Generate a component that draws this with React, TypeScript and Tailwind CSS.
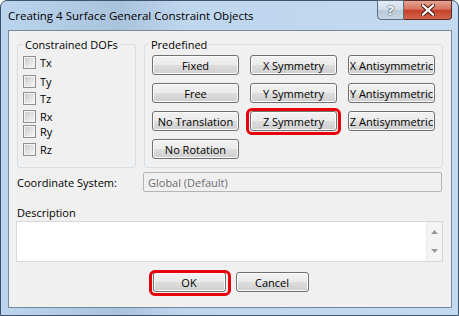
import { ReactNode } from 'react';

const font = { fontFamily: '"Open Sans", "Noto Sans", sans-serif' };

const btnBase =
  'h-[20px] rounded-[3px] border border-[#707070] bg-[linear-gradient(to_bottom,#f2f2f2_0%,#ebebeb_48%,#dddddd_52%,#cfcfcf_100%)] shadow-[inset_0_0_0_1px_#fbfbfb] text-[11px] leading-none text-black whitespace-nowrap flex items-center justify-center';

function Btn({ children, marked }: { children: ReactNode; marked?: boolean }) {
  return (
    <div className="relative">
      <div className={btnBase}>{children}</div>
      {marked && (
        <span className="absolute -inset-x-[4px] -top-[3px] -bottom-[4px] rounded-[6px] border-[3px] border-[#e8000c]" />
      )}
    </div>
  );
}

function Check({ label, mt }: { label: string; mt: string }) {
  return (
    <div className={`flex items-center gap-[4px] h-[13px] ${mt}`}>
      <span className="w-[13px] h-[13px] border border-[#8e8f8f] bg-[#f4f4f4] p-[1px]">
        <span className="block w-full h-full bg-[linear-gradient(135deg,#cbcbcb,#f6f6f6)]" />
      </span>
      <span className="text-[11px] leading-none text-black">{label}</span>
    </div>
  );
}

export default function App() {
  return (
    <div className="w-[459px] h-[316px] bg-white" style={font}>
      <div className="w-full h-full flex flex-col border border-[#3e5468] rounded-t-[7px] bg-[linear-gradient(to_right,#bcd5ee_0%,#aac3dc_26%,#bed6ee_40%,#c3daf0_100%)] px-[7px] pr-[6px] pb-[7px]">
        {/* title bar */}
        <div className="h-[29px] flex items-start justify-between shrink-0">
          <div className="pt-[7px] text-[11.5px] leading-[15px] text-black">Creating 4 Surface General Constraint Objects</div>
          <div className="flex -mt-px">
            <div className="w-[27px] h-[20px] rounded-bl-[4px] border border-[#5a6e82] bg-[linear-gradient(to_bottom,#e4edf5_0%,#d0dce8_50%,#b9c9d8_51%,#c7d6e4_100%)] flex items-center justify-center">
              <span className="text-[13px] font-bold leading-none text-white [text-shadow:0_0_2px_#3a4a5a,0_0_1px_#3a4a5a]">?</span>
            </div>
            <div className="w-[48px] h-[20px] rounded-br-[4px] border border-l-0 border-[#5a2a28] bg-[linear-gradient(to_bottom,#e6a593_0%,#d7735f_45%,#c4402a_52%,#d2664f_100%)] flex items-center justify-center">
              <svg width="14" height="12" viewBox="0 0 14 12">
                <path d="M2 1.5 L12 10.5 M12 1.5 L2 10.5" stroke="#4a1f1a" strokeWidth="4.2" strokeLinecap="square" />
                <path d="M2 1.5 L12 10.5 M12 1.5 L2 10.5" stroke="#ffffff" strokeWidth="2.2" strokeLinecap="square" />
              </svg>
            </div>
          </div>
        </div>

        {/* client area */}
        <div className="flex-1 flex flex-col border border-[#7b8a99] bg-[#f0f0f0]">
          <div className="flex gap-[8px] pl-[8px] pt-[6px]">
            <fieldset className="w-[119px] h-[131px] border border-[#d5dfe5] rounded-[3px] pl-[5px]">
              <legend className="px-[2px] text-[11px] leading-[15px] text-black">Constrained DOFs</legend>
              <Check label="Tx" mt="mt-[4px]" />
              <Check label="Ty" mt="mt-[6px]" />
              <Check label="Tz" mt="mt-[4px]" />
              <Check label="Rx" mt="mt-[5px]" />
              <Check label="Ry" mt="mt-[2px]" />
              <Check label="Rz" mt="mt-[5px]" />
            </fieldset>
            <fieldset className="w-[299px] h-[131px] border border-[#d5dfe5] rounded-[3px] pl-[7px]">
              <legend className="-ml-[3px] px-[2px] text-[11px] leading-[15px] text-black">Predefined</legend>
              <div className="mt-[3px] grid grid-cols-[87px_87px_87px] gap-x-[11px] gap-y-[8px]">
                <Btn>Fixed</Btn>
                <Btn>X Symmetry</Btn>
                <Btn>X Antisymmetric</Btn>
                <Btn>Free</Btn>
                <Btn>Y Symmetry</Btn>
                <Btn>Y Antisymmetric</Btn>
                <Btn>No Translation</Btn>
                <Btn marked>Z Symmetry</Btn>
                <Btn>Z Antisymmetric</Btn>
                <Btn>No Rotation</Btn>
              </div>
            </fieldset>
          </div>

          <div className="flex items-center pl-[8px] mt-[4px]">
            <div className="w-[126px] text-[11px] leading-none text-black">Coordinate System:</div>
            <div className="w-[299px] h-[20px] border border-[#b5b5b5] rounded-[2px] bg-[#f0f0f0] flex items-center pl-[4px] text-[11px] leading-none text-[#6d6d6d]">
              Global (Default)
            </div>
          </div>

          <div className="pl-[8px] mt-[13px] text-[11px] leading-[15px] text-black">Description</div>
          <div className="pl-[7px] mt-[1px]">
            <div className="w-[427px] h-[41px] border border-[#d5d9de] bg-white flex justify-end">
              <div className="w-[16px] h-full bg-[#f4f4f4] border-l border-[#ececec] flex flex-col items-center justify-between py-[8px]">
                <svg width="7" height="4" viewBox="0 0 7 4"><path d="M0 4 L3.5 0 L7 4 Z" fill="#9a9a9a" /></svg>
                <svg width="7" height="4" viewBox="0 0 7 4"><path d="M0 0 L3.5 4 L7 0 Z" fill="#9a9a9a" /></svg>
              </div>
            </div>
          </div>

          <div className="mt-[10px] flex justify-center gap-[10px] pl-px">
            <div className="relative">
              <div className={`${btnBase} w-[73px] border-[#3c7fb1] shadow-[inset_0_0_0_1px_#48d8fb]`}>OK</div>
              <span className="absolute -left-[4px] -right-[5px] -top-[2px] -bottom-[4px] rounded-[6px] border-[3px] border-[#e8000c]" />
            </div>
            <div className={`${btnBase} w-[73px]`}>Cancel</div>
          </div>
        </div>
      </div>
    </div>
  );
}
